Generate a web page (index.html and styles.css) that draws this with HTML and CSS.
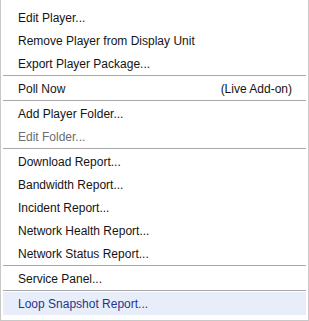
FILE: index.html
```html
<!DOCTYPE html>
<html lang="en">
<head>
  <meta charset="UTF-8" />
  <title>Player context menu</title>
  <link rel="stylesheet" href="styles.css">
</head>
<body>
  <div class="menu">
    <div class="item">Edit Player...</div>
    <div class="item">Remove Player from Display Unit</div>
    <div class="item">Export Player Package...</div>
    <div class="sep"></div>
    <div class="item"><span>Poll Now</span><span class="hint">(Live Add-on)</span></div>
    <div class="sep"></div>
    <div class="item">Add Player Folder...</div>
    <div class="item disabled">Edit Folder...</div>
    <div class="sep"></div>
    <div class="item">Download Report...</div>
    <div class="item">Bandwidth Report...</div>
    <div class="item">Incident Report...</div>
    <div class="item">Network Health Report...</div>
    <div class="item">Network Status Report...</div>
    <div class="sep"></div>
    <div class="item">Service Panel...</div>
    <div class="sep"></div>
    <div class="item active">Loop Snapshot Report...</div>
  </div>
</body>
</html>
```

FILE: styles.css
```css
body {
  margin: 0;
  background-color: #fff;
  font-family: "Liberation Sans", Arial, sans-serif;
  font-size: 12px;
  color: #141414;
}
.menu {
  box-sizing: border-box;
  width: 309px;
  height: 321px;
  padding: 6px 2px 4px;
  border: 1px solid #c8c8c8;
  border-top: none;
  background-color: #fff;
  display: flex;
  flex-direction: column;
}
.item {
  height: 23px;
  flex-shrink: 0;
  padding: 0 14px 0 15px;
  display: flex;
  align-items: center;
  justify-content: space-between;
  white-space: nowrap;
}
.item.disabled {
  color: #6d6d6d;
}
.item.active {
  background-color: #e8eef9;
  color: #1f3590;
}
.sep {
  height: 1px;
  flex-shrink: 0;
  margin-bottom: 1px;
  background-color: #a9a9a9;
}
```
